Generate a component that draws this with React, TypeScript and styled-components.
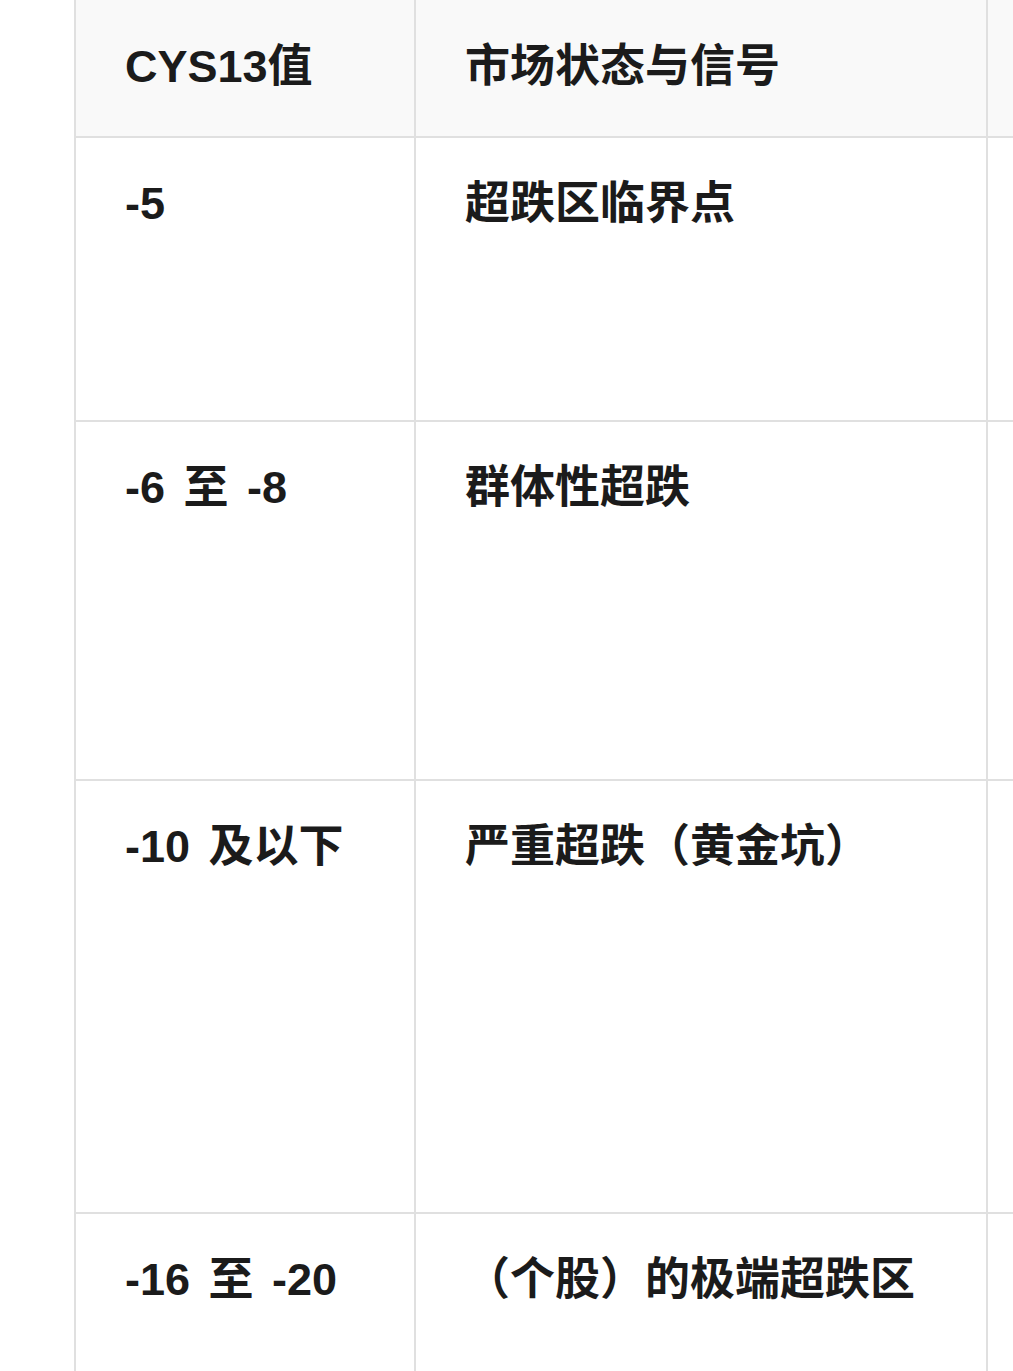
import React from 'react';
import styled, {createGlobalStyle} from 'styled-components';

const GlobalStyle = createGlobalStyle`
  html, body {
    margin: 0;
    padding: 0;
    background: #fff;
  }
  body {
    font-family: "Liberation Sans", "Noto Sans CJK SC", sans-serif;
    color: #1b1b1b;
  }
`

type Row = {
    value: string;
    state: string;
    height: number;
}

const rows: Row[] = [
    {value: '-5', state: '超跌区临界点', height: 284},
    {value: '-6 至 -8', state: '群体性超跌', height: 359},
    {value: '-10 及以下', state: '严重超跌（黄金坑）', height: 433},
    {value: '-16 至 -20', state: '（个股）的极端超跌区', height: 300},
]

export default function App() {
    return (
        <>
            <GlobalStyle/>
            <Page>
                <TableWrap>
                    <Table>
                        <colgroup>
                            <col style={{width: 340}}/>
                            <col style={{width: 572}}/>
                            <col style={{width: 420}}/>
                        </colgroup>
                        <thead>
                        <HeadRow>
                            <Th>CYS13值</Th>
                            <Th>市场状态与信号</Th>
                            <Th/>
                        </HeadRow>
                        </thead>
                        <tbody>
                        {rows.map(r => (
                            <BodyRow key={r.value} $height={r.height}>
                                <Td>{r.value}</Td>
                                <Td>{r.state}</Td>
                                <Td/>
                            </BodyRow>
                        ))}
                        </tbody>
                    </Table>
                </TableWrap>
            </Page>
        </>
    )
}

const Page = styled.div`
  width: 1013px;
  height: 1371px;
  overflow: hidden;
  background: #fff;
`

const TableWrap = styled.div`
  padding-left: 74px;
  width: 1400px;
`

const Table = styled.table`
  border-collapse: collapse;
  table-layout: fixed;
  width: 1332px;
  font-size: 45px;
  font-weight: 700;
  line-height: 1.5;
`

const HeadRow = styled.tr`
  background: #f9f9f9;
  height: 137px;
`

const BodyRow = styled.tr<{ $height: number }>`
  background: #fff;
  height: ${p => p.$height}px;
`

const Th = styled.th`
  text-align: left;
  vertical-align: top;
  font-weight: 700;
  padding: 33px 48px 0 49px;
  border: 2px solid #e0e0e0;
  border-top: none;
  white-space: nowrap;
  overflow: hidden;
`

const Td = styled.td`
  vertical-align: top;
  padding: 32px 48px 0 49px;
  border: 2px solid #e0e0e0;
  white-space: nowrap;
  word-spacing: 6px;
  overflow: hidden;
`
